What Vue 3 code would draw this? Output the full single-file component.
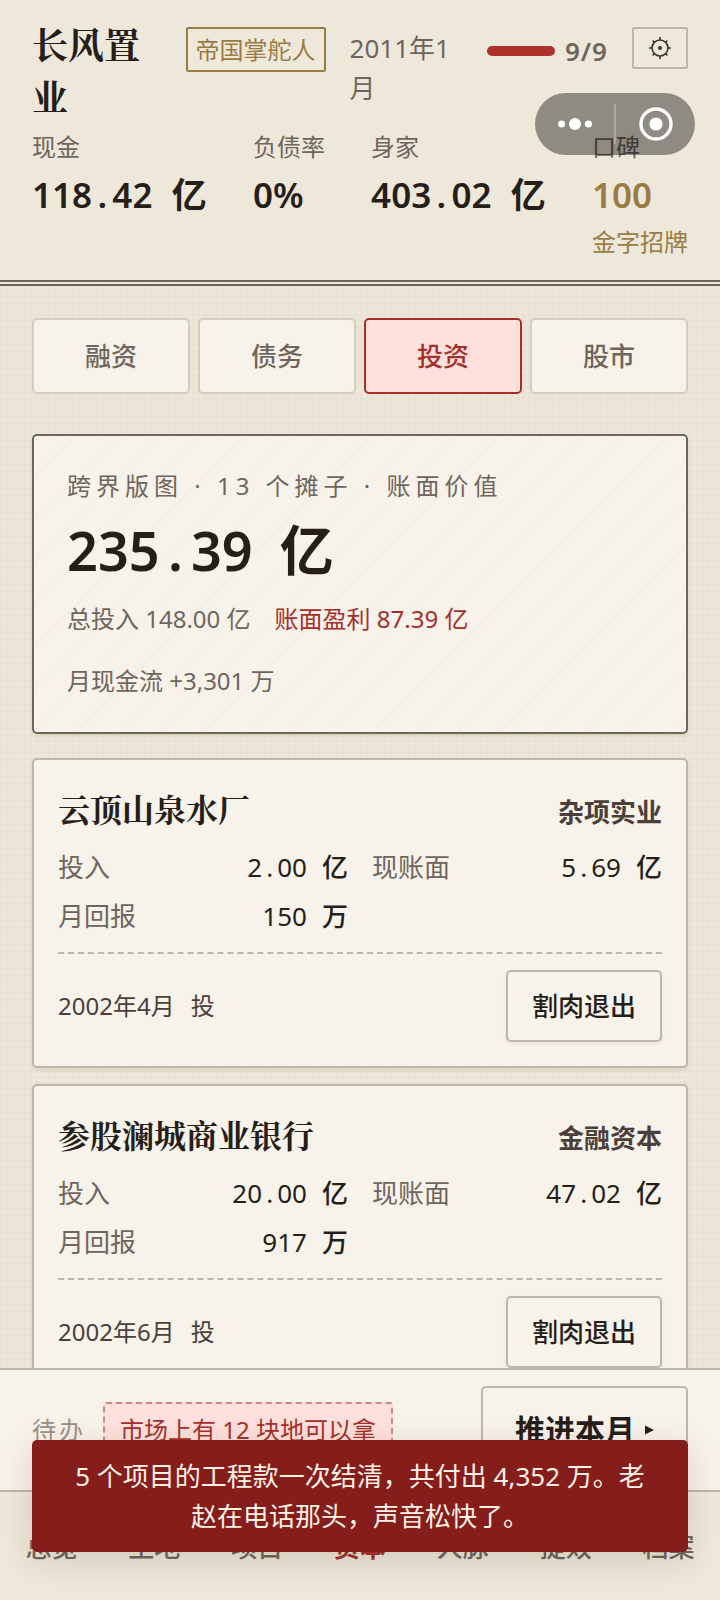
<script setup>
import { ref, h } from 'vue'

// A figure set on even cells: the point and the space are as wide as a digit.
const Figure = (props) =>
  h('span', { class: 'figure' }, [
    ...props.value.split(/([.])/).map((part) =>
      part === '.' ? h('span', { class: 'figure-point' }, '.') : part
    ),
    props.unit ? h('span', { class: 'figure-unit' }, props.unit) : null
  ])
Figure.props = ['value', 'unit']

const stats = [
  { label: '现金', value: '118.42', unit: '亿' },
  { label: '负债率', value: '0%' },
  { label: '身家', value: '403.02', unit: '亿' },
  { label: '口碑', value: '100', note: '金字招牌', gold: true }
]

const tabs = ['融资', '债务', '投资', '股市']
const tab = ref('投资')

const holdings = [
  {
    name: '云顶山泉水厂',
    kind: '杂项实业',
    since: '2002年4月',
    rows: [
      { label: '投入', value: '2.00', unit: '亿' },
      { label: '现账面', value: '5.69', unit: '亿' },
      { label: '月回报', value: '150', unit: '万' }
    ]
  },
  {
    name: '参股澜城商业银行',
    kind: '金融资本',
    since: '2002年6月',
    rows: [
      { label: '投入', value: '20.00', unit: '亿' },
      { label: '现账面', value: '47.02', unit: '亿' },
      { label: '月回报', value: '917', unit: '万' }
    ]
  }
]

const sections = ['总览', '土地', '项目', '资本', '人脉', '提效', '档案']
const section = ref('资本')
const energy = { now: 9, max: 9 }
</script>

<template>
  <div class="app">
    <header class="top">
      <div class="identity">
        <h1 class="company">长风置业</h1>
        <span class="rank">帝国掌舵人</span>
        <span class="date">2011年1月</span>
        <div class="energy">
          <span class="energy-track">
            <span class="energy-fill" :style="{ width: (energy.now / energy.max) * 100 + '%' }"></span>
          </span>
          <span class="energy-text">{{ energy.now }}/{{ energy.max }}</span>
        </div>
        <button class="gear" type="button" aria-label="设置">
          <svg viewBox="0 0 24 24" width="24" height="24" fill="none" stroke="#3d332c" stroke-width="1.6">
            <circle cx="12" cy="12" r="8" />
            <circle cx="12" cy="12" r="2" fill="#3d332c" stroke="none" />
            <path d="M12 4V1M12 20v3M4 12H1M20 12h3M6.3 6.3 4.6 4.6M17.7 6.3l1.7-1.7M6.3 17.7l-1.7 1.7M17.7 17.7l1.7 1.7" />
          </svg>
        </button>
      </div>
      <dl class="stats">
        <div v-for="s in stats" :key="s.label" class="stat" :class="{ gold: s.gold }">
          <dt>{{ s.label }}</dt>
          <dd><Figure :value="s.value" :unit="s.unit" /></dd>
          <dd v-if="s.note" class="note">{{ s.note }}</dd>
        </div>
      </dl>
      <div class="capsule">
        <button type="button" aria-label="更多">
          <svg viewBox="0 0 34 12" width="34" height="12" fill="#fff">
            <circle cx="3.6" cy="6" r="3.6" /><circle cx="17" cy="6" r="6" /><circle cx="30.4" cy="6" r="3.6" />
          </svg>
        </button>
        <span class="capsule-line"></span>
        <button type="button" aria-label="关闭">
          <svg viewBox="0 0 34 34" width="34" height="34">
            <circle cx="17" cy="17" r="15" fill="none" stroke="#fff" stroke-width="3.4" />
            <circle cx="17" cy="17" r="6.6" fill="#fff" />
          </svg>
        </button>
      </div>
    </header>

    <main class="content">
      <nav class="tabs">
        <button v-for="t in tabs" :key="t" type="button" :class="{ on: t === tab }" @click="tab = t">{{ t }}</button>
      </nav>

      <section class="summary">
        <p class="summary-label">跨界版图 · 13 个摊子 · 账面价值</p>
        <p class="summary-value"><Figure value="235.39" unit="亿" /></p>
        <div class="summary-rows">
          <span>总投入 148.00 亿</span>
          <span class="gain">账面盈利 87.39 亿</span>
          <span>月现金流 +3,301 万</span>
        </div>
      </section>

      <article v-for="item in holdings" :key="item.name" class="card">
        <div class="card-head">
          <h2>{{ item.name }}</h2>
          <span class="kind">{{ item.kind }}</span>
        </div>
        <dl class="card-rows">
          <div v-for="r in item.rows" :key="r.label">
            <dt>{{ r.label }}</dt>
            <dd><Figure :value="r.value" :unit="r.unit" /></dd>
          </div>
        </dl>
        <div class="card-foot">
          <span class="since"><span>{{ item.since }}</span><span>投</span></span>
          <button type="button">割肉退出</button>
        </div>
      </article>
    </main>

    <footer class="bottom">
      <div class="todo">
        <span class="todo-label">待办</span>
        <a class="todo-chip" href="#land">市场上有 12 块地可以拿</a>
        <button class="advance" type="button">
          推进本月
          <svg viewBox="0 0 9 10" width="9" height="10"><path d="M0 0.5 9 5 0 9.5Z" fill="#261e18" /></svg>
        </button>
      </div>
      <nav class="sections">
        <button v-for="s in sections" :key="s" type="button" :class="{ on: s === section }" @click="section = s">{{ s }}</button>
      </nav>
      <div class="toast" role="status">5 个项目的工程款一次结清，共付出 4,352 万。老赵在电话那头，声音松快了。</div>
    </footer>
  </div>
</template>

<style>
body {
  margin: 0;
}
.figure {
  font-variant-numeric: tabular-nums;
  white-space: nowrap;
}
.figure-point {
  display: inline-block;
  width: 0.58em;
  text-align: center;
}
.figure-unit {
  margin-left: 0.55em;
}
</style>

<style scoped>
.app {
  --ink: #261e18;
  --mute: #70655c;
  --red: #a5302b;
  --gold: #9a7b43;
  --paper: #f7f2ea;
  --line: #bfb6aa;
  display: flex;
  flex-direction: column;
  height: 100vh;
  overflow: hidden;
  color: var(--ink);
  font-family: "Noto Sans", "Noto Sans CJK SC", sans-serif;
  font-size: 24px;
  line-height: 38px;
  background-color: #eee7d9;
  background-image:
    repeating-linear-gradient(0deg, rgba(110, 90, 50, 0.022) 0 2px, transparent 2px 6px),
    repeating-linear-gradient(90deg, rgba(110, 90, 50, 0.022) 0 2px, transparent 2px 6px);
}
h1, h2, p, dl, dd {
  margin: 0;
}
button {
  box-sizing: border-box;
  padding: 0;
  font: inherit;
  color: inherit;
  background: none;
  border: 0;
}
.top {
  position: relative;
  flex: none;
  padding: 18px 32px 20px;
  background: #eee8da;
  border-bottom: 6px double #70655c;
}
.identity {
  display: grid;
  grid-template-columns: minmax(0, 8fr) auto minmax(0, 7fr) auto auto;
  column-gap: 24px;
  align-items: start;
}
.company {
  font-family: "Noto Serif CJK SC", "Noto Sans CJK SC", serif;
  font-size: 36px;
  line-height: 52px;
  font-weight: 700;
}
.rank {
  margin-top: 9px;
  padding: 0 8px;
  line-height: 41px;
  color: var(--gold);
  border: 2px solid var(--gold);
  border-radius: 2px;
}
.date {
  margin-top: 10px;
  font-size: 26px;
  line-height: 40px;
  color: var(--mute);
}
.energy {
  display: flex;
  align-items: center;
  gap: 10px;
  margin-top: 14px;
  color: var(--mute);
  font-weight: 600;
}
.energy-track {
  width: 68px;
  height: 10px;
  border-radius: 5px;
  background: #d8cfc0;
}
.energy-fill {
  display: block;
  height: 100%;
  border-radius: 5px;
  background: #ac322b;
}
.energy-text {
  font-size: 26px;
  letter-spacing: 1px;
}
.gear {
  display: flex;
  align-items: center;
  justify-content: center;
  width: 56px;
  height: 42px;
  margin-top: 9px;
  border: 2px solid var(--line);
  border-radius: 2px;
}
.stats {
  display: flex;
  justify-content: space-between;
  margin-top: 6px;
}
.stat dt {
  color: var(--mute);
}
.stat dd {
  font-size: 35px;
  line-height: 57px;
  font-weight: 600;
}
.stat .note {
  font-size: 24px;
  line-height: 37px;
  font-weight: 400;
}
.gold dd {
  color: var(--gold);
}
.capsule {
  position: absolute;
  top: 93px;
  right: 25px;
  display: grid;
  grid-template-columns: 1fr 2px 1fr;
  align-items: center;
  width: 160px;
  height: 62px;
  border-radius: 31px;
  background: rgba(0, 0, 0, 0.4);
}
.capsule button {
  display: flex;
  align-items: center;
  justify-content: center;
}
.capsule-line {
  height: 40px;
  background: rgba(255, 255, 255, 0.25);
}
.content {
  flex: 1;
  min-height: 0;
  overflow: hidden;
  padding: 32px 32px 0;
}
.tabs {
  display: grid;
  grid-template-columns: repeat(4, 1fr);
  gap: 8px;
}
.tabs button {
  height: 76px;
  font-size: 26px;
  font-weight: 500;
  color: var(--mute);
  background: var(--paper);
  border: 2px solid #d6cdbf;
  border-radius: 5px;
}
.tabs .on {
  color: var(--red);
  background: #ffe0dc;
  border-color: var(--red);
}
.summary {
  margin: 40px 0 24px;
  padding: 31px 33px 32px;
  border: 2px solid #70655c;
  border-radius: 5px;
  background: repeating-linear-gradient(135deg, transparent 0 28px, rgba(90, 90, 60, 0.025) 28px 30px) var(--paper);
  box-shadow: 0 2px 4px rgba(60, 40, 20, 0.1);
  color: var(--mute);
}
.summary-label {
  letter-spacing: 5px;
}
.summary-value {
  margin: 10px 0 15px;
  font-size: 54px;
  line-height: 70px;
  font-weight: 600;
  color: var(--ink);
}
.summary-value :deep(.figure-unit) {
  margin-left: 0.5em;
}
.summary-rows {
  display: flex;
  flex-wrap: wrap;
  gap: 24px;
}
.gain {
  color: var(--red);
}
.card {
  margin-bottom: 16px;
  padding: 22px 24px 24px;
  background: var(--paper);
  border: 2px solid var(--line);
  border-radius: 5px;
  box-shadow: 0 2px 4px rgba(60, 40, 20, 0.1);
}
.card-head {
  display: flex;
  justify-content: space-between;
  align-items: baseline;
}
.card-head h2 {
  font-family: "Noto Serif CJK SC", "Noto Sans CJK SC", serif;
  font-size: 32px;
  line-height: 52px;
  font-weight: 700;
}
.kind {
  font-size: 26px;
  font-weight: 600;
  color: #4a4039;
}
.card-rows {
  display: grid;
  grid-template-columns: 1fr 1fr;
  gap: 7px 24px;
  margin: 12px 0 15px;
  font-size: 26px;
  line-height: 42px;
}
.card-rows div {
  display: flex;
  justify-content: space-between;
}
.card-rows dt {
  color: var(--mute);
}
.card-rows :deep(.figure-unit) {
  margin-left: 0.58em;
  font-weight: 500;
}
.card-foot {
  display: flex;
  justify-content: space-between;
  align-items: center;
  padding-top: 16px;
  border-top: 2px dashed var(--line);
}
.since {
  display: flex;
  gap: 16px;
  color: #4a4039;
}
.card-foot button {
  height: 72px;
  padding: 0 24px;
  font-size: 26px;
  font-weight: 500;
  border: 2px solid var(--line);
  border-radius: 5px;
  box-shadow: 0 2px 4px rgba(60, 40, 20, 0.06);
}
.bottom {
  position: relative;
  flex: none;
}
.todo {
  display: flex;
  align-items: center;
  height: 120px;
  padding: 0 32px;
  background: var(--paper);
  border-top: 2px solid var(--line);
}
.todo-label {
  letter-spacing: 3px;
  color: #999085;
}
.todo-chip {
  margin-left: 17px;
  padding: 7px 15px;
  line-height: 38px;
  color: var(--red);
  text-decoration: none;
  background: #ffe0dc;
  border: 2px dashed #c98a84;
  border-radius: 3px;
}
.advance {
  display: flex;
  align-items: center;
  justify-content: center;
  gap: 10px;
  height: 88px;
  margin-left: auto;
  padding: 0 32px;
  font-size: 30px;
  font-weight: 600;
  border: 2px solid var(--line);
  border-radius: 5px;
}
.sections {
  display: grid;
  grid-template-columns: repeat(7, 1fr);
  height: 108px;
  background: #eee8da;
  border-top: 2px solid var(--line);
}
.sections button {
  padding-top: 2px;
  font-size: 26px;
  font-weight: 500;
  color: var(--mute);
}
.sections .on {
  font-weight: 600;
  color: var(--red);
}
.toast {
  position: absolute;
  right: 32px;
  bottom: 48px;
  left: 32px;
  padding: 16px 32px;
  font-size: 26px;
  line-height: 40px;
  text-align: center;
  color: #fdf1e6;
  background: #851d1a;
  border-radius: 5px;
  box-shadow: 0 8px 32px rgba(60, 40, 20, 0.16);
}
</style>
